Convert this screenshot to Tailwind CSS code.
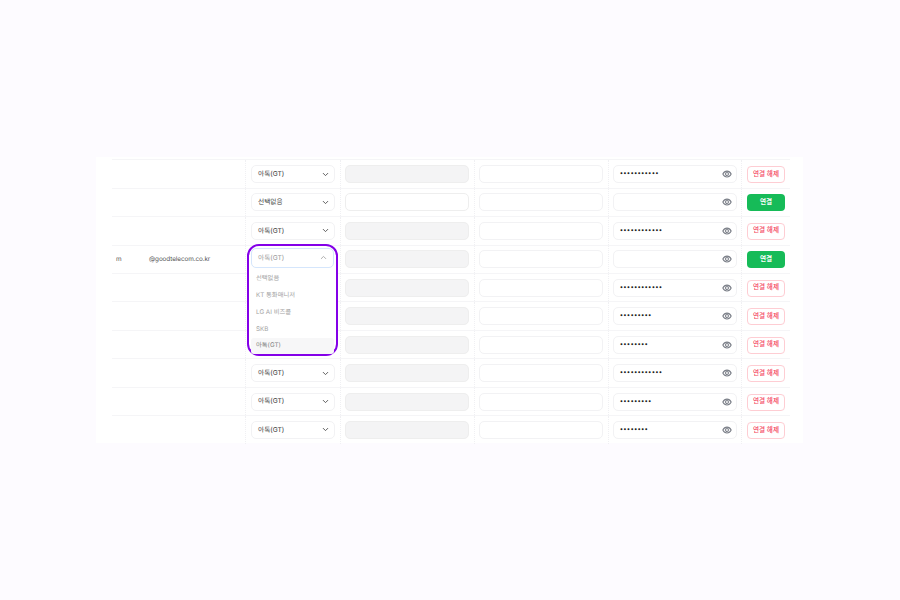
<!DOCTYPE html>
<html lang="ko">
<head>
    <meta charset="UTF-8">
    <title>연결 설정</title>
    <script src="https://cdn.jsdelivr.net/npm/@tailwindcss/browser@4"></script>
</head>
<body class="w-[900px] h-[600px] overflow-hidden bg-[#fdfbff] pt-[157px] pl-[96px] font-['Inter','Noto_Sans_CJK_KR',sans-serif] text-[6.7px] text-[#3a3a3a] antialiased [text-rendering:geometricPrecision]">
    <div id="card" class="w-[707px] h-[286px] bg-white pl-4 pr-[13px] pt-[2.3px]"></div>

    <script>
        const rows = [
            { sel: '아톡(GT)', locked: true, pw: 11, on: true },
            { sel: '선택없음', locked: false, pw: 0, on: false },
            { sel: '아톡(GT)', locked: true, pw: 12, on: true },
            { sel: '아톡(GT)', locked: true, pw: 0, on: false, open: true },
            { sel: '', locked: true, pw: 12, on: true },
            { sel: '', locked: true, pw: 9, on: true },
            { sel: '', locked: true, pw: 8, on: true },
            { sel: '아톡(GT)', locked: true, pw: 12, on: true },
            { sel: '아톡(GT)', locked: true, pw: 9, on: true },
            { sel: '아톡(GT)', locked: true, pw: 8, on: true },
        ];

        const chevronDown = '<svg class="w-[9px] h-[9px] text-[#555]" viewBox="0 0 24 24" fill="none" stroke="currentColor" stroke-width="2.5" stroke-linecap="round" stroke-linejoin="round"><path d="M6 9l6 6 6-6"/></svg>';
        const chevronUp = '<svg class="w-[9px] h-[9px] text-[#aaa]" viewBox="0 0 24 24" fill="none" stroke="currentColor" stroke-width="2.5" stroke-linecap="round" stroke-linejoin="round"><path d="M6 15l6-6 6 6"/></svg>';
        const eye = '<svg class="w-[10px] h-[10px] text-[#7b7f88]" viewBox="0 0 24 24" fill="none" stroke="currentColor" stroke-width="2.6" stroke-linecap="round" stroke-linejoin="round"><path d="M2 12s3.6-7 10-7 10 7 10 7-3.6 7-10 7-10-7-10-7z"/><circle cx="12" cy="12" r="3.5"/></svg>';

        const dropdown = `
            <div class="absolute left-[-4px] top-[-6.375px] w-[91px] h-[112px] rounded-[12px] border-2 border-[#8400e8] z-10 bg-white px-[2px] pt-[2px] flex flex-col">
                <div class="h-[20px] shrink-0 flex items-center justify-between rounded-[5px] border border-[#d5e6fc] pl-[6px] pr-[5px] text-[#999]">아톡(GT)${chevronUp}</div>
                <div class="mt-[2px] flex flex-col text-[#a3a3a3] text-[6.3px]">
                    <div class="h-[17px] flex items-center pl-[5px]">선택없음</div>
                    <div class="h-[17px] flex items-center pl-[5px]">KT 통화매니저</div>
                    <div class="h-[17px] flex items-center pl-[5px]">LG AI 비즈콜</div>
                    <div class="h-[17px] flex items-center pl-[5px]">SKB</div>
                    <div class="h-[16px] flex items-center pl-[5px] rounded-[3px] bg-[#f7f7f8] text-[#808080]">아톡(GT)</div>
                </div>
            </div>`;

        document.getElementById('card').innerHTML = rows.map((r, i) => `
            <div class="flex h-[28.45px] border-t border-[#f5f5f7]">
                <div class="w-[133px] flex items-center text-[#555] text-[6.4px] tracking-[-0.1px]">
                    ${r.open ? '<span class="w-[37px] pl-[4px]">m</span><span>@goodtelecom.co.kr</span>' : ''}
                </div>
                <div class="relative w-[95px] pl-[5px] pr-[5px] flex items-center border-l border-dotted border-[#f0f0f3]">
                    ${r.open ? '<div class="relative w-full h-[18px]">' + dropdown + '</div>'
                        : `<div class="w-full h-[18px] flex items-center justify-between rounded-[5px] border border-[#f2f2f4] pl-[6px] pr-[4px]">${r.sel}${chevronDown}</div>`}
                </div>
                <div class="w-[134px] pl-[4px] pr-[5px] flex items-center border-l border-dotted border-[#f0f0f3]">
                    <div class="w-full h-[18px] rounded-[5px] border border-[#eeeeee] ${r.locked ? 'bg-[#f4f4f5]' : 'bg-white'}"></div>
                </div>
                <div class="w-[134px] pl-[4px] pr-[5px] flex items-center border-l border-dotted border-[#f0f0f3]">
                    <div class="w-full h-[18px] rounded-[5px] border border-[#f2f2f4]"></div>
                </div>
                <div class="w-[133px] pl-[4px] pr-[4px] flex items-center border-l border-dotted border-[#f0f0f3]">
                    <div class="w-full h-[18px] flex items-center justify-between rounded-[5px] border border-[#f2f2f4] pl-[6px] pr-[4px] text-[#222]">
                        <span class="tracking-[0.7px] font-bold text-[6px] leading-none">${'•'.repeat(r.pw)}</span>${eye}
                    </div>
                </div>
                <div class="flex-1 pl-[5px] pt-[1px] flex items-center border-l border-dotted border-[#f0f0f3]">
                    ${r.on
                        ? '<button class="w-[38px] h-[17px] rounded-[4px] border border-[#fecdd3] bg-white text-[#f43f5e] text-[6.6px] font-medium">연결 해제</button>'
                        : '<button class="w-[38px] h-[17px] rounded-[4px] bg-[#16bb58] text-white text-[6.6px] font-bold">연결</button>'}
                </div>
            </div>`).join('');
    </script>
</body>
</html>
